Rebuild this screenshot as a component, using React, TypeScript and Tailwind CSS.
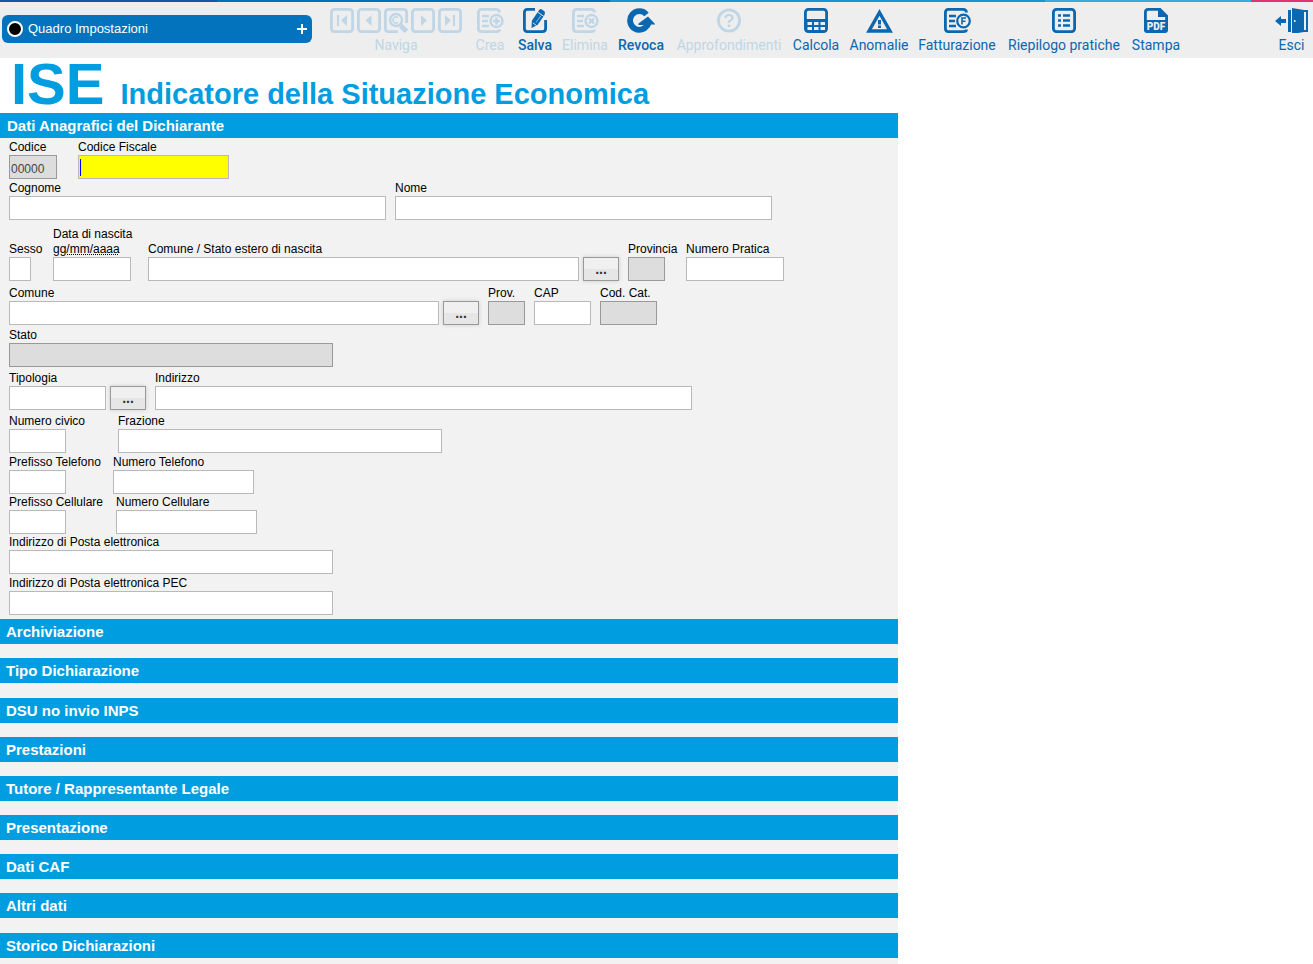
import type { ReactNode } from "react";

type FieldProps = {
  id: string;
  label: ReactNode;
  width: string;
  cell?: string;
  readOnly?: boolean;
  value?: string;
  lookup?: boolean;
};

const inputBase = "block h-6 border px-px pt-1 text-xs outline-none";

function Field({ id, label, width, cell = "", readOnly, value = "", lookup }: FieldProps) {
  return (
    <div className={`shrink-0 ${cell}`}>
      <label htmlFor={id} className="block whitespace-nowrap">{label}</label>
      <div className="flex gap-1">
        <input
          id={id}
          type="text"
          defaultValue={value}
          readOnly={readOnly}
          className={`${inputBase} ${width} ${
            readOnly ? "border-[#999] bg-[#ddd] text-[#444]" : "border-[#b9b9b9] bg-white"
          }`}
        />
        {lookup && (
          <button
            type="button"
            aria-label="Cerca"
            className="h-6 w-9 border border-[#999] bg-linear-to-b from-[#f0f0f0] from-50% to-[#e6e6e6] to-50% text-sm leading-5 font-bold text-[#333] shadow-[0_0_4px_#ccc]"
          >
            ...
          </button>
        )}
      </div>
    </div>
  );
}

function Row({ className = "", children }: { className?: string; children: ReactNode }) {
  return <div className={`flex items-end gap-[9px] ${className}`}>{children}</div>;
}

function Icon({ children, width = 24 }: { children: ReactNode; width?: number }) {
  return (
    <svg width={width} height="25" viewBox={`0 0 ${width} 25`} fill="none" stroke="currentColor" strokeWidth="2.800" className="shrink-0">
      {children}
    </svg>
  );
}

const box = <rect x="1.400" y="1.400" width="21.200" height="22.200" rx="3" />;

// open sheet with three text lines, shared by Crea, Elimina and Fatturazione
const sheet = (
  <>
    <path d="M22.500 4.500Q22.500 1.400 19 1.400H4.400Q1.400 1.400 1.400 4.400V20.600Q1.400 23.600 4.400 23.600H19Q22.500 23.600 22.500 21.500" />
    <path d="M5 8H12M5 13H11M5 18H12" strokeWidth="2.400" />
  </>
);

const navIcons = [
  { name: "Primo", art: <>{box}<path d="M8 7v11" strokeWidth="2" /><path d="M17 7v11l-6-5.500z" fill="currentColor" stroke="none" /></> },
  { name: "Precedente", art: <>{box}<path d="M14.500 7v11l-6-5.500z" fill="currentColor" stroke="none" /></> },
  {
    name: "Cerca",
    art: (
      <>
        <path d="M22.600 15V4.400Q22.600 1.400 19.600 1.400H4.400Q1.400 1.400 1.400 4.400V20.600Q1.400 23.600 4.400 23.600H14" />
        <circle cx="12" cy="12" r="6" strokeWidth="2.400" />
        <path d="M14 9.800a3 3 0 1 0 0 4.400" strokeWidth="1.400" />
        <path d="M16.500 17.500l6 6" strokeWidth="5" />
      </>
    ),
  },
  { name: "Successivo", art: <>{box}<path d="M10 7v11l6-5.500z" fill="currentColor" stroke="none" /></> },
  { name: "Ultimo", art: <>{box}<path d="M16 7v11" strokeWidth="2" /><path d="M7 7v11l6-5.500z" fill="currentColor" stroke="none" /></> },
];

const tools = [
  {
    label: "Crea",
    width: "w-[42px]",
    disabled: true,
    iconWidth: 27,
    art: <>{sheet}<circle cx="19.500" cy="13" r="6" strokeWidth="2.400" /><path d="M16 13h7M19.500 9.500v7" strokeWidth="2.400" /></>,
  },
  {
    label: "Salva",
    width: "w-12",
    bold: true,
    art: (
      <>
        <path d="M12 1.400H4.400Q1.400 1.400 1.400 4.400V20.600Q1.400 23.600 4.400 23.600H19.600Q22.600 23.600 22.600 20.600V12" />
        <path d="M8.500 20l.5-7.500L16.500 1.500Q18 0 22 4L21.500 7L14.500 17z" fill="currentColor" stroke="none" />
        <path d="M14.500 4l6.500 4.500M10 15l3.500 2.500" stroke="#eee" strokeWidth="0.900" />
        <path d="M13 14.500l5-7" stroke="#eee" strokeWidth="0.600" />
      </>
    ),
  },
  {
    label: "Elimina",
    width: "w-[52px]",
    disabled: true,
    iconWidth: 27,
    art: <>{sheet}<circle cx="19.500" cy="13" r="6" strokeWidth="2.400" /><path d="M17 10.500l5 5M22 10.500l-5 5" strokeWidth="2.400" /></>,
  },
  {
    label: "Revoca",
    width: "w-[60px]",
    bold: true,
    iconWidth: 28,
    art: (
      <>
        <path d="M19.500 6.500A9.300 9.300 0 1 0 21 16" strokeWidth="5.800" />
        <path d="M21 8.500L28.500 16.500H24L22 20L18.500 17H11.500V15.500z" fill="currentColor" stroke="none" />
      </>
    ),
  },
  {
    label: "Approfondimenti",
    width: "w-[116px]",
    disabled: true,
    art: (
      <>
        <circle cx="12" cy="12.500" r="10.600" />
        <path d="M8.500 10Q8.500 7 12 7T15.500 10Q15.500 11.500 13.500 12.500T12 15" strokeWidth="2.200" />
        <path d="M12 16.500v2.500" strokeWidth="2.400" />
      </>
    ),
  },
  {
    label: "Calcola",
    width: "w-[58px]",
    art: (
      <>
        {box}
        <path d="M1 11H23V22Q23 24 21 24H3Q1 24 1 22Z" fill="currentColor" stroke="none" />
        <path d="M3.500 15.500h4.500M10 15.500h4.500M16.500 15.500h4.500M3.500 20.500h4.500M10 20.500h4.500M16.500 20.500h4.500" stroke="#eee" strokeWidth="3" />
      </>
    ),
  },
  {
    label: "Anomalie",
    width: "w-[68px]",
    iconWidth: 27,
    art: (
      <>
        <path d="M13.500 4.500L24 23H3z" strokeWidth="3.400" />
        <path d="M13.500 12v4.500M13.500 17.500v2.500" strokeWidth="3" />
      </>
    ),
  },
  {
    label: "Fatturazione",
    width: "w-[88px]",
    iconWidth: 27,
    art: <>{sheet}<circle cx="19.500" cy="13" r="6.300" fill="#eee" strokeWidth="2.200" /><path d="M18 16.500V10H22M18 13.300h3.500" strokeWidth="1.600" /></>,
  },
  {
    label: "Riepilogo pratiche",
    width: "w-[126px]",
    art: <>{box}<path d="M6 7.500h3M6 12.500h3M6 17.500h3M11 7.500h7M11 12.500h7M11 17.500h7" strokeWidth="2.600" /></>,
  },
  {
    label: "Stampa",
    width: "w-[58px]",
    art: (
      <>
        <path d="M1.400 14V4.400Q1.400 1.400 4 1.400H16L22.600 8V14" />
        <path d="M14 1v8h9z" fill="currentColor" stroke="none" />
        <path d="M0 12H24V22Q24 25 21 25H3Q0 25 0 22Z" fill="currentColor" stroke="none" />
        <text x="12" y="22" textAnchor="middle" fill="#eee" stroke="none" fontSize="10" fontWeight="900">PDF</text>
      </>
    ),
  },
];

const sections = [
  { title: "Archiviazione", space: "mb-3.5" },
  { title: "Tipo Dichiarazione", space: "mb-[15px]" },
  { title: "DSU no invio INPS", space: "mb-3.5" },
  { title: "Prestazioni", space: "mb-3.5" },
  { title: "Tutore / Rappresentante Legale", space: "mb-3.5" },
  { title: "Presentazione", space: "mb-3.5" },
  { title: "Dati CAF", space: "mb-3.5" },
  { title: "Altri dati", space: "mb-[15px]" },
  { title: "Storico Dichiarazioni", space: "mb-1.5" },
];

function Toolbar() {
  return (
    <header className="bg-[#eee]">
      <div className="flex h-0.5">
        <div className="grow-[217] bg-[#1257a8]" />
        <div className="grow-[393] bg-[#0072bc]" />
        <div className="grow-[435] bg-[#1893d4]" />
        <div className="grow-[206] bg-[#3aabe2]" />
        <div className="grow-[62] bg-[#e23372]" />
      </div>
      <div className="flex h-14 items-start font-[Roboto,sans-serif] text-sm leading-4 text-[#0b67b0]">
        <button
          type="button"
          className="mt-[13px] ml-0.5 flex h-7 w-[310px] shrink-0 items-center rounded-md bg-[#0273bc] pr-1 pl-[5px] font-['Liberation_Sans',Arial,sans-serif] text-[13px] text-white"
        >
          <span className="mr-[5px] size-4 rounded-full border-2 border-white bg-black" />
          Quadro Impostazioni
          <svg width="12" height="12" viewBox="0 0 12 12" stroke="currentColor" strokeWidth="2" className="ml-auto">
            <path d="M6 1v10M1 6h10" />
          </svg>
        </button>
        <div className="ml-[18px] flex shrink-0 flex-col items-center pt-1.5 text-[#bfd6e6]">
          <div className="flex gap-[3px]">
            {navIcons.map((nav) => (
              <button key={nav.name} type="button" aria-label={nav.name} disabled>
                <Icon>{nav.art}</Icon>
              </button>
            ))}
          </div>
          <span className="mt-1">Naviga</span>
        </div>
        <div className="ml-[7px] flex shrink-0 pt-1.5">
          {tools.map((tool) => (
            <button
              key={tool.label}
              type="button"
              disabled={tool.disabled}
              className={`flex flex-col items-center gap-1 whitespace-nowrap ${tool.width} ${
                tool.disabled ? "text-[#bfd6e6]" : ""
              } ${tool.bold ? "font-medium" : ""}`}
            >
              <Icon width={tool.iconWidth}>{tool.art}</Icon>
              {tool.label}
            </button>
          ))}
        </div>
        <button type="button" className="mr-[5px] ml-auto flex shrink-0 flex-col items-center gap-1 pt-1.5">
          <Icon width={33}>
            <path d="M0 13l6-5v3h5v4H6v3z" fill="currentColor" stroke="none" />
            <path d="M14.500 2v22" strokeWidth="3" />
            <path d="M29 3h3v20h-3" strokeWidth="2" />
            <path d="M17 0l12 2v22l-12 2z" fill="currentColor" stroke="none" />
            <path d="M19 13h1.500" stroke="#eee" strokeWidth="2" />
          </Icon>
          Esci
        </button>
      </div>
    </header>
  );
}

export default function App() {
  return (
    <div className="min-h-screen bg-white font-['Liberation_Sans',Arial,sans-serif] text-xs leading-[15px] text-black">
      <Toolbar />
      <main className="max-w-[898px]">
        <h1 className="flex h-[55px] items-baseline gap-4 pl-[11px] font-bold whitespace-nowrap text-[#009de0]">
          <span className="text-[58px] leading-[52px]">ISE</span>
          <span className="text-[29px]">Indicatore della Situazione Economica</span>
        </h1>
        <form className="bg-[#f2f2f2]">
          <h2 className="h-[25px] bg-[#009de0] pl-[7px] text-[15px] leading-[25px] font-bold text-white">
            Dati Anagrafici del Dichiarante
          </h2>
          <div className="px-[9px] pt-0.5 pb-1">
            <Row>
              <Field id="codice" label="Codice" width="w-12" cell="w-[60px]" value="00000" readOnly />
              <div className="relative">
                <label htmlFor="cf" className="block">Codice Fiscale</label>
                <input id="cf" type="text" className="block h-6 w-[151px] border border-[#b9b9b9] bg-[#ff0] px-px text-xs caret-transparent outline-none" />
                <span className="absolute bottom-[3px] left-0.5 h-[17px] w-px bg-[#00f]" />
              </div>
            </Row>
            <Row className="mt-0.5">
              <Field id="cognome" label="Cognome" width="w-[377px]" />
              <Field id="nome" label="Nome" width="w-[377px]" />
            </Row>
            <Row className="mt-[7px]">
              <Field id="sesso" label="Sesso" width="w-[22px]" cell="w-[35px]" />
              <Field
                id="nascita"
                label={<>Data di nascita<br /><abbr title="giorno/mese/anno">gg/mm/aaaa</abbr></>}
                width="w-[78px]"
                cell="w-[86px]"
              />
              <Field id="comune-nascita" label="Comune / Stato estero di nascita" width="w-[431px]" lookup />
              <Field id="provincia" label="Provincia" width="w-[37px]" cell="w-[49px]" readOnly />
              <Field id="pratica" label="Numero Pratica" width="w-[98px]" />
            </Row>
            <Row className="mt-[5px]">
              <Field id="comune" label="Comune" width="w-[430px]" lookup />
              <Field id="prov" label="Prov." width="w-[37px]" readOnly />
              <Field id="cap" label="CAP" width="w-[57px]" />
              <Field id="cod-cat" label="Cod. Cat." width="w-[57px]" readOnly />
            </Row>
            <Row className="mt-[3px]">
              <Field id="stato" label="Stato" width="w-[324px]" readOnly />
            </Row>
            <Row className="mt-1">
              <Field id="tipologia" label="Tipologia" width="w-[97px]" lookup />
              <Field id="indirizzo" label="Indirizzo" width="w-[537px]" />
            </Row>
            <Row className="mt-1">
              <Field id="civico" label="Numero civico" width="w-[57px]" cell="w-[100px]" />
              <Field id="frazione" label="Frazione" width="w-[324px]" />
            </Row>
            <Row className="mt-0.5">
              <Field id="pref-tel" label="Prefisso Telefono" width="w-[57px]" cell="w-[95px]" />
              <Field id="tel" label="Numero Telefono" width="w-[141px]" />
            </Row>
            <Row className="mt-px">
              <Field id="pref-cell" label="Prefisso Cellulare" width="w-[57px]" cell="w-[98px]" />
              <Field id="cell" label="Numero Cellulare" width="w-[141px]" />
            </Row>
            <Row className="mt-px">
              <Field id="email" label="Indirizzo di Posta elettronica" width="w-[324px]" />
            </Row>
            <Row className="mt-0.5">
              <Field id="pec" label="Indirizzo di Posta elettronica PEC" width="w-[324px]" />
            </Row>
          </div>
          <div className="flow-root">
            {sections.map((section) => (
              <h2 key={section.title} className={`bg-[#009de0] text-[15px] font-bold text-white ${section.space}`}>
                <button type="button" className="block h-[25px] w-full pl-1.5 text-left leading-[25px]">
                  {section.title}
                </button>
              </h2>
            ))}
          </div>
        </form>
      </main>
    </div>
  );
}
